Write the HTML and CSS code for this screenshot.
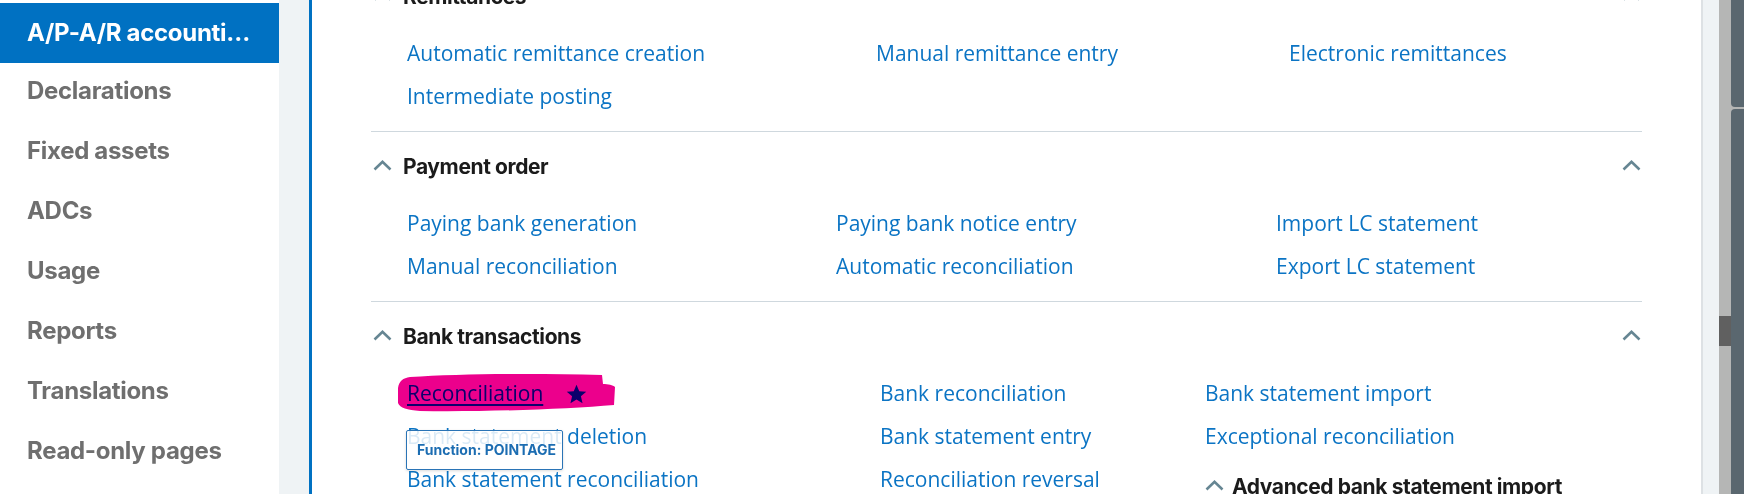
FILE: index.html
```html
<!DOCTYPE html>
<html lang="en">
<head>
<meta charset="utf-8">
<title>A/P-A/R accounting</title>
<link rel="stylesheet" href="styles.css">
</head>
<body>
<div class="app">
  <nav class="sidebar">
    <a class="nav-item active" href="#">A/P-A/R accounting</a>
    <a class="nav-item" href="#">Declarations</a>
    <a class="nav-item" href="#">Fixed assets</a>
    <a class="nav-item" href="#">ADCs</a>
    <a class="nav-item" href="#">Usage</a>
    <a class="nav-item" href="#">Reports</a>
    <a class="nav-item" href="#">Translations</a>
    <a class="nav-item" href="#">Read-only pages</a>
  </nav>

  <main class="panel">
    <div class="panel-inner">
      <section class="group">
        <header class="group-head">
          <svg class="chev" viewBox="0 0 19 11"><polyline points="1.5,9.5 9.5,1.8 17.5,9.5"/></svg>
          <h2 class="group-title">Remittances</h2>
          <svg class="chev chev-end" viewBox="0 0 19 11"><polyline points="1.5,9.5 9.5,1.8 17.5,9.5"/></svg>
        </header>
        <div class="links links-remit">
          <div class="col">
            <a class="link" href="#">Automatic remittance creation</a>
            <a class="link" href="#">Intermediate posting</a>
          </div>
          <div class="col">
            <a class="link" href="#">Manual remittance entry</a>
          </div>
          <div class="col">
            <a class="link" href="#">Electronic remittances</a>
          </div>
        </div>
      </section>

      <section class="group">
        <header class="group-head">
          <svg class="chev" viewBox="0 0 19 11"><polyline points="1.5,9.5 9.5,1.8 17.5,9.5"/></svg>
          <h2 class="group-title">Payment order</h2>
          <svg class="chev chev-end" viewBox="0 0 19 11"><polyline points="1.5,9.5 9.5,1.8 17.5,9.5"/></svg>
        </header>
        <div class="links links-pay">
          <div class="col">
            <a class="link" href="#">Paying bank generation</a>
            <a class="link" href="#">Manual reconciliation</a>
          </div>
          <div class="col">
            <a class="link" href="#">Paying bank notice entry</a>
            <a class="link" href="#">Automatic reconciliation</a>
          </div>
          <div class="col">
            <a class="link" href="#">Import LC statement</a>
            <a class="link" href="#">Export LC statement</a>
          </div>
        </div>
      </section>

      <section class="group">
        <header class="group-head">
          <svg class="chev" viewBox="0 0 19 11"><polyline points="1.5,9.5 9.5,1.8 17.5,9.5"/></svg>
          <h2 class="group-title">Bank transactions</h2>
          <svg class="chev chev-end" viewBox="0 0 19 11"><polyline points="1.5,9.5 9.5,1.8 17.5,9.5"/></svg>
        </header>
        <div class="links links-bank">
          <div class="col">
            <div class="fav">
              <a class="link link-current" href="#">Reconciliation</a>
              <svg class="star" viewBox="0 0 24 24"><path d="M12 1.8l3 7.1 7.6.6-5.8 5 1.8 7.5L12 18 5.4 22l1.8-7.5-5.8-5 7.6-.6z"/></svg>
              <svg class="mark" viewBox="0 0 217 40" preserveAspectRatio="none"><path d="M0 16 C1 9 5 6 12 5 C60 2 130 1 204 3 L205 12 C210 12 215 13 217 15 L216 33 C170 37 90 40 22 39 C9 38 2 36 0 31 Z"/></svg>
              <div class="tooltip">Function: POINTAGE</div>
            </div>
            <a class="link" href="#">Bank statement deletion</a>
            <a class="link" href="#">Bank statement reconciliation</a>
          </div>
          <div class="col">
            <a class="link" href="#">Bank reconciliation</a>
            <a class="link" href="#">Bank statement entry</a>
            <a class="link" href="#">Reconciliation reversal</a>
          </div>
          <div class="col">
            <a class="link" href="#">Bank statement import</a>
            <a class="link" href="#">Exceptional reconciliation</a>
            <div class="subhead">
              <svg class="chev chev-sub" viewBox="0 0 19 11"><polyline points="1.5,9.5 9.5,1.8 17.5,9.5"/></svg>
              <h3 class="sub-title">Advanced bank statement import</h3>
            </div>
          </div>
        </div>
      </section>
    </div>
  </main>

  <div class="rail"></div>
  <div class="scrollbar"><div class="thumb"></div></div>
  <div class="dock"><div class="dock-top"></div><div class="dock-bottom"></div></div>
</div>
</body>
</html>
```

FILE: styles.css
```css
* { box-sizing: border-box; }

html, body {
  margin: 0;
  padding: 0;
}

body {
  width: 1744px;
  height: 494px;
  overflow: hidden;
  background: #eff3f5;
  font-family: "Open Sans", "Noto Sans", sans-serif;
}

.app {
  display: flex;
  height: 494px;
  overflow: hidden;
}

/* Sidebar */
.sidebar {
  flex: 0 0 279px;
  width: 279px;
  min-width: 0;
  overflow: hidden;
  background: #ffffff;
  padding-top: 3px;
  margin-right: 30px;
}

.nav-item {
  display: block;
  height: 60px;
  padding: 0 26px 5px 27px;
  line-height: 55px;
  font-family: Inter, Roboto, "Liberation Sans", sans-serif;
  font-weight: 700;
  font-size: 24px;
  letter-spacing: -0.3px;
  color: #6f6f6f;
  white-space: nowrap;
  overflow: hidden;
  text-overflow: ellipsis;
  text-decoration: none;
}

.nav-item.active {
  background: #0071c2;
  color: #ffffff;
  padding-top: 2px;
  padding-bottom: 3px;
}

/* Main panel */
.panel {
  flex: 0 0 1392px;
  min-width: 0;
  background: #ffffff;
  border-left: 3px solid #0071c2;
  overflow: hidden;
}

.panel-inner {
  padding: 0 59px;
  margin-top: -38px;
}

.group {
  border-bottom: 1px solid #cfd8de;
}

.group-head {
  display: flex;
  align-items: center;
  height: 57px;
  padding-top: 13px;
}

.chev {
  flex: none;
  width: 19px;
  height: 11px;
  margin-left: 2px;
  margin-bottom: 4px;
}

.chev polyline {
  fill: none;
  stroke: #668693;
  stroke-width: 2.6;
}

.chev-end {
  margin-left: auto;
  margin-right: 1px;
}

.group-title {
  margin: 0 0 0 11px;
  font-family: Inter, Roboto, "Liberation Sans", sans-serif;
  font-weight: 700;
  font-size: 21px;
  line-height: 44px;
  letter-spacing: -0.4px;
  color: #1b1b1b;
}

.links {
  display: grid;
  padding: 13px 0 13px 36px;
}

.links-remit { grid-template-columns: 469px 413px 1fr; }
.links-pay { grid-template-columns: 429px 440px 1fr; }
.links-bank { grid-template-columns: 473px 325px 1fr; }

.col {
  display: flex;
  flex-direction: column;
  align-items: flex-start;
  min-width: 0;
}

.link {
  display: block;
  height: 43px;
  line-height: 43px;
  font-size: 21px;
  color: #0b74c4;
  text-decoration: none;
  white-space: nowrap;
}

.fav {
  position: relative;
  display: flex;
  align-items: center;
  height: 43px;
}

.link-current {
  text-decoration: underline;
  text-decoration-thickness: 1.5px;
  text-underline-offset: 3px;
}

.star {
  width: 23px;
  height: 22px;
  margin-left: 22px;
  margin-top: 1px;
  fill: #0b74c4;
}

.mark {
  position: absolute;
  left: -9px;
  top: 0;
  width: 217px;
  height: 40px;
  fill: #ec008c;
  mix-blend-mode: multiply;
  pointer-events: none;
}

.tooltip {
  position: absolute;
  left: -1px;
  top: 58px;
  width: 157px;
  height: 40px;
  padding-left: 10px;
  background: rgba(255, 255, 255, 0.85);
  border: 1px solid #2a74b6;
  border-radius: 2px;
  box-shadow: 0 1px 3px rgba(0, 0, 0, 0.15);
  font-family: Inter, Roboto, "Liberation Sans", sans-serif;
  font-weight: 700;
  font-size: 14px;
  line-height: 38px;
  color: #1c6db2;
  white-space: nowrap;
}

.subhead {
  display: flex;
  align-items: center;
  height: 44px;
  margin-top: 7px;
}

.chev-sub {
  margin-left: 0;
}

.sub-title {
  margin: 0 0 0 8px;
  font-family: Inter, Roboto, "Liberation Sans", sans-serif;
  font-weight: 700;
  font-size: 21px;
  line-height: 44px;
  letter-spacing: -0.4px;
  color: #1b1b1b;
  white-space: nowrap;
}

/* Right edge */
.rail {
  flex: 0 0 18px;
  border-left: 2px solid #dde1e4;
  background: #eff3f5;
}

.scrollbar {
  flex: 0 0 12px;
  background: #b5b6b5;
}

.thumb {
  height: 30px;
  margin-top: 316px;
  background: #606060;
}

.dock {
  flex: 0 0 13px;
  display: flex;
  flex-direction: column;
  gap: 2px;
  background: #b5b6b5;
}

.dock-top {
  height: 107px;
  background: #5a676f;
  border-bottom-left-radius: 4px;
}

.dock-bottom {
  flex: 1;
  background: #5a676f;
  border-top-left-radius: 4px;
}
```
